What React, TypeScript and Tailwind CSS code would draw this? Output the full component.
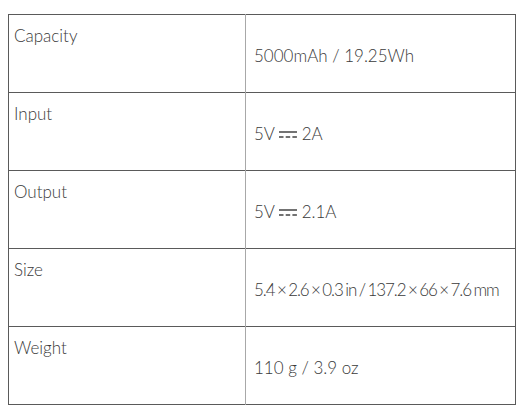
const rows: { label: string; value: React.ReactNode; tight?: boolean }[] = [
  { label: 'Capacity', value: '5000mAh / 19.25Wh' },
  { label: 'Input', value: <>5V <Dc /> 2A</> },
  { label: 'Output', value: <>5V <Dc /> 2.1A</> },
  { label: 'Size', value: '5.4 × 2.6 × 0.3 in / 137.2 × 66 × 7.6 mm', tight: true },
  { label: 'Weight', value: '110 g / 3.9 oz' },
]

// direct current symbol: solid line over dashed line
function Dc() {
  return (
    <svg width="18" height="9" viewBox="0 0 18 9" className="inline-block align-middle mb-[3px]">
      <line x1="0" y1="2" x2="18" y2="2" stroke="#444" strokeWidth="1.5" />
      <line x1="0" y1="7" x2="18" y2="7" stroke="#444" strokeWidth="1.5" strokeDasharray="4.5 2.2" />
    </svg>
  )
}

export default function App() {
  return (
    <div className="w-[524px] h-[414px] bg-white pt-[14px] pl-[8px]" style={{ fontFamily: 'Lato, "Open Sans", sans-serif' }}>
      <table className="w-[508px] border-collapse border border-[#5a5a5a] text-[17px] font-light text-[#3a3a3a]">
        <tbody>
          {rows.map((r) => (
            <tr key={r.label} className="h-[78px] border-b border-[#5a5a5a]">
              <td className="w-[237px] align-top pl-[5px] pt-[8px] border-r border-[#a8a8a8]">{r.label}</td>
              <td className={`align-middle pl-[8px] pt-[4px] whitespace-nowrap ${r.tight ? 'tracking-[-1.1px] [word-spacing:-1px]' : ''}`}>{r.value}</td>
            </tr>
          ))}
        </tbody>
      </table>
    </div>
  )
}
